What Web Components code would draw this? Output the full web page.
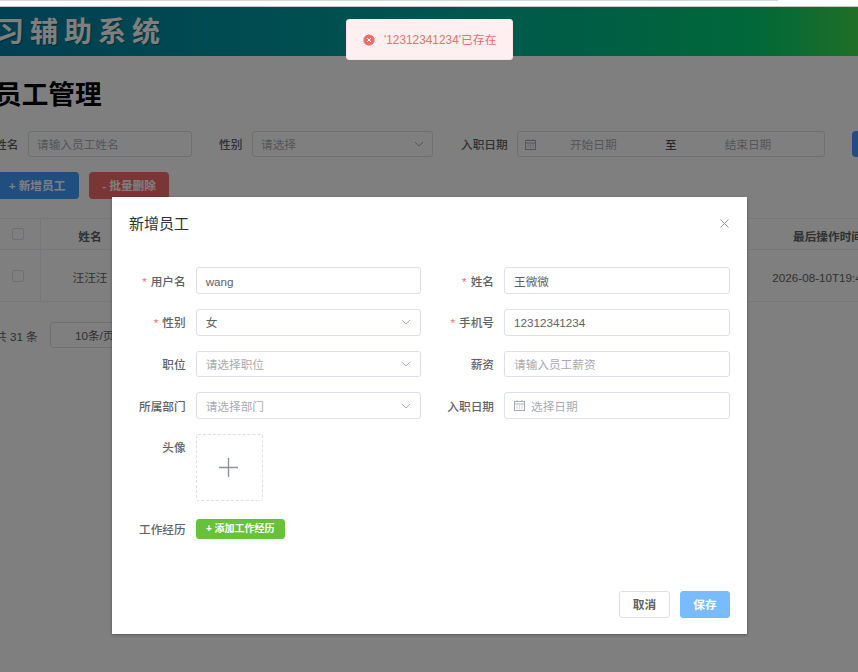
<!DOCTYPE html>
<html lang="zh"><head><meta charset="utf-8"><title>员工管理</title>
<style>
html,body{margin:0;padding:0;height:672px;overflow:hidden;background:#fff;font-family:"Liberation Sans","Noto Sans CJK SC",sans-serif;font-size:11.67px;color:#606266}
</style></head><body>
<rs-chrome></rs-chrome>
<rs-viewport>
  <rs-banner>学习辅助系统</rs-banner>
  <rs-page></rs-page>
  <rs-mask slot="over"></rs-mask>
  <rs-toast slot="over">'12312341234'已存在</rs-toast>
  <rs-dialog slot="over" heading="新增员工">
    <rs-form>
      <rs-label req>用户名</rs-label><rs-input value="wang"></rs-input>
      <rs-label req>姓名</rs-label><rs-input value="王微微"></rs-input>
      <rs-label req>性别</rs-label><rs-input value="女" kind="select"></rs-input>
      <rs-label req>手机号</rs-label><rs-input value="12312341234"></rs-input>
      <rs-label>职位</rs-label><rs-input placeholder="请选择职位" kind="select"></rs-input>
      <rs-label>薪资</rs-label><rs-input placeholder="请输入员工薪资"></rs-input>
      <rs-label>所属部门</rs-label><rs-input placeholder="请选择部门" kind="select"></rs-input>
      <rs-label>入职日期</rs-label><rs-input placeholder="选择日期" kind="date"></rs-input>
      <rs-label top>头像</rs-label><rs-upload></rs-upload>
      <rs-label wide>工作经历</rs-label><rs-button tone="green" size="mini">+ 添加工作经历</rs-button>
    </rs-form>
    <rs-button slot="footer" tone="plain">取消</rs-button>
    <rs-button slot="footer" tone="lightblue">保存</rs-button>
  </rs-dialog>
</rs-viewport>
<script>
const FONT='"Liberation Sans","Noto Sans CJK SC",sans-serif';
const CHEV='<svg width="12" height="12" viewBox="0 0 12 12" fill="none" stroke="#a8abb2" stroke-width="1"><path d="M2 4 6 8 10 4"/></svg>';
const CAL='<svg width="11" height="11" viewBox="0 0 11 11" fill="none" stroke="#a8abb2" stroke-width="1"><rect x=".5" y="1.5" width="10" height="9"/><path d="M.5 4h10M3 0v2M8 0v2"/><path d="M2.5 6h1M5 6h1M7.5 6h1M2.5 8h1M5 8h1M7.5 8h1" stroke-width="1"/></svg>';
function def(name,html,init){
  customElements.define(name,class extends HTMLElement{
    connectedCallback(){
      if(this.shadowRoot)return;
      const s=this.attachShadow({mode:'open'});
      s.innerHTML=typeof html==='function'?html(this):html;
      if(init)init(this,s);
    }
  });
}
def('rs-chrome',`<style>:host{display:block;height:7px;background:#fff;box-sizing:border-box;border-bottom:1px solid #c8c8c8}
i{display:block;width:778px;height:1px;background:#d6d6d6}</style><i></i>`);
def('rs-viewport',`<style>:host{display:block;position:relative;height:665px;overflow:hidden;background:#fff}</style><slot></slot><slot name="over"></slot>`);
def('rs-banner',`<style>:host{display:flex;align-items:center;height:49px;width:858px;box-sizing:border-box;padding:0 0 4px 0;
background:linear-gradient(to right,#007fa4 0,#00aaa0 50%,#00d072 88%,#3ede50 100%);overflow:hidden}
span{display:block;margin-left:-38px;color:#fff;font:bold 28px/1 "Noto Sans CJK SC",serif;letter-spacing:6px;white-space:nowrap;text-shadow:1px 1px 1px rgba(0,0,0,.35)}</style><span><slot></slot></span>`);
def('rs-page',()=>`<style>:host{display:block;width:1100px;margin-left:-5px;color:#606266;font:11.67px/1 ${FONT}}
h1{margin:0;padding-top:22px;height:53px;box-sizing:border-box;font:bold 26.67px/30px "Noto Sans CJK SC",sans-serif;color:#000}
.search{display:flex;align-items:center;height:26px;margin-top:22px}
.lab{color:#606266;white-space:nowrap;flex:none;padding-top:2px;font-weight:500}
.box{height:26px;box-sizing:border-box;border:1px solid #dcdfe6;border-radius:3px;display:flex;align-items:center;color:#a8abb2;background:#fff;white-space:nowrap;flex:none}
.t{padding-top:1px}
.acts{display:flex;gap:10px;margin-top:15px}
.btn{height:27px;width:84px;border-radius:4px;display:flex;align-items:center;justify-content:center;color:#fff;font-weight:bold;background:#409eff;box-sizing:border-box;flex:none}
.red{background:#f56c6c;width:80px}
.blue{width:60px;height:26px;margin-left:27px}
.row{display:grid;grid-template-columns:46px 718px 138px;border-bottom:1px solid #ebeef5;align-items:stretch}
.head{height:32px;box-sizing:border-box;border-top:1px solid #ebeef5;margin-top:19px;font-weight:bold;color:#606266}
.body{height:52px;box-sizing:border-box}
.cell{display:flex;align-items:center;justify-content:center}
.txt{padding-top:5px;box-sizing:border-box;white-space:nowrap}
.cb{border-right:1px solid #ebeef5}
.cb i{width:12px;height:12px;border:1px solid #dcdfe6;border-radius:2px;box-sizing:border-box;background:#fff;display:block}
.body .cb i{margin-top:1px}
.mid{display:grid;grid-template-columns:98px 1fr}
.pager{display:flex;align-items:center;height:26px;margin-top:20px}
</style>
<h1>员工管理</h1>
<div class="search">
  <span class="lab" style="width:23px;margin-right:10px">姓名</span>
  <div class="box" style="width:164px;padding-left:8px"><span class="t">请输入员工姓名</span></div>
  <span class="lab" style="margin-left:27px;margin-right:9.7px">性别</span>
  <div class="box" style="width:181px;padding:0 7px 0 8px;justify-content:space-between"><span class="t">请选择</span>${CHEV}</div>
  <span class="lab" style="margin-left:28px;margin-right:9.3px">入职日期</span>
  <div class="box" style="width:308px;padding-left:7px">${CAL}<span class="t" style="margin-left:34px;width:47px">开始日期</span><span class="t" style="margin-left:48px;color:#303133">至</span><span class="t" style="margin-left:48px">结束日期</span></div>
  <div class="btn blue">查询</div>
</div>
<div class="acts"><div class="btn"><span class="t">+ 新增员工</span></div><div class="btn red"><span class="t">- 批量删除</span></div></div>
<div class="row head"><div class="cell cb"><i></i></div><div class="mid"><div class="cell txt">姓名</div><div></div></div><div class="cell txt">最后操作时间</div></div>
<div class="row body"><div class="cell cb"><i></i></div><div class="mid"><div class="cell txt">汪汪汪</div><div></div></div><div class="cell txt" style="font-weight:400;white-space:nowrap">2026-08-10T19:42:11</div></div>
<div class="pager"><span style="margin-right:13px;padding-top:3px;width:42px;white-space:nowrap">共 31 条</span><div class="box" style="width:110px;padding-left:24px;color:#606266"><span style="padding-top:2px">10条/页</span></div></div>`);
def('rs-mask',`<style>:host{display:block;position:absolute;inset:0;background:rgba(0,0,0,.5)}</style>`);
def('rs-toast',()=>`<style>:host{position:absolute;left:346px;top:12px;width:167px;height:41px;box-sizing:border-box;display:flex;align-items:center;padding:0 0 0 15.5px;gap:9.5px;background:#fef0f0;border:1px solid #fde2e2;border-radius:3px;color:#f56c6c;font:11.85px/1 ${FONT};white-space:nowrap}
span{padding-top:2px}</style>
<svg width="12" height="12" viewBox="0 0 12 12" style="flex:none"><circle cx="6" cy="6" r="5.6" fill="#f56c6c"/><path d="M4.1 4.1 7.9 7.9M7.9 4.1 4.1 7.9" stroke="#fff" stroke-width="1"/></svg><span><slot></slot></span>`);
def('rs-dialog',h=>`<style>:host{position:absolute;left:112px;top:190px;width:635px;height:437px;box-sizing:border-box;background:#fff;box-shadow:0 1px 3px rgba(0,0,0,.3);display:flex;flex-direction:column;padding:0 17px 16px;font:11.67px/1 ${FONT}}
header{display:flex;justify-content:space-between;align-items:center;height:54px;margin-bottom:16.3px}
h2{margin:0 0 4px;font:400 15px/1 "Noto Sans CJK SC",sans-serif;color:#303133}
svg{margin-bottom:2px}
.main{flex:1}
footer{display:flex;justify-content:flex-end;gap:10px}</style>
<header><h2>${h.getAttribute('heading')}</h2><svg width="9" height="9" viewBox="0 0 9 9" stroke="#909399" stroke-width="1" fill="none" style="margin-right:1px"><path d="M.5.5l8 8M8.5.5l-8 8"/></svg></header>
<div class="main"><slot></slot></div><footer><slot name="footer"></slot></footer>`);
def('rs-form',`<style>:host{display:grid;grid-template-columns:56.7px 225.3px 63px 226px;column-gap:10px;row-gap:15px;grid-auto-rows:auto;align-items:start}
::slotted(rs-upload){grid-column:2 / 5}::slotted([size]){grid-column:2 / 5;margin-top:3px}</style><slot></slot>`);
def('rs-label',h=>`<style>:host{display:block;justify-self:end;height:26.67px;line-height:26.67px;font-weight:500;color:#606266;white-space:nowrap;text-align:right;font-size:11.67px}
.w{display:block;padding-top:1.5px}
:host([top]){height:auto;line-height:26px}
:host([wide]){margin-top:3px;line-height:20px;height:20px}
b{color:#f56c6c;font-weight:400;margin-right:4px}</style><span class="w">${h.hasAttribute('req')?'<b>*</b>':''}<slot></slot></span>`);
def('rs-input',h=>{const k=h.getAttribute('kind'),v=h.getAttribute('value'),p=h.getAttribute('placeholder');
return `<style>:host{display:flex;align-items:center;height:26.67px;box-sizing:border-box;border:1px solid #dcdfe6;border-radius:3px;padding:0 10px 0 9px;background:#fff;font-size:11.67px;color:${v?'#606266':'#a8abb2'}}
span{flex:1;padding-top:1.5px}svg{flex:none}.c{margin-right:6px}.s{margin-right:-2px}</style>
${k==='date'?CAL.replace('<svg','<svg class="c"'):''}<span>${v||p}</span>${k==='select'?CHEV.replace('<svg','<svg class="s"'):''}`});
def('rs-upload',`<style>:host{display:flex;align-items:center;justify-content:center;width:67px;height:67px;box-sizing:border-box;border:1px dashed #dcdfe6;border-radius:2px}</style>
<svg width="19" height="19" viewBox="0 0 19 19" stroke="#8c939d" stroke-width="1.4" style="margin-right:2px"><path d="M9.5 0v19M0 9.5h19"/></svg>`);
def('rs-button',h=>{const t=h.getAttribute('tone');const mini=h.getAttribute('size')==='mini';
const c={green:['#67c23a','#fff','#67c23a'],plain:['#fff','#606266','#dcdfe6'],lightblue:['#79bbff','#fff','#79bbff']}[t];
return `<style>:host{display:flex;align-items:center;justify-content:center;box-sizing:border-box;background:${c[0]};color:${c[1]};border:1px solid ${c[2]};border-radius:3px;font-weight:bold;white-space:nowrap;${mini?'width:89px;height:20px;font-size:10px':'height:27px;font-size:11.67px;width:'+(t==='plain'?51:50)+'px'}}</style><slot></slot>`});
</script>
</body></html>
